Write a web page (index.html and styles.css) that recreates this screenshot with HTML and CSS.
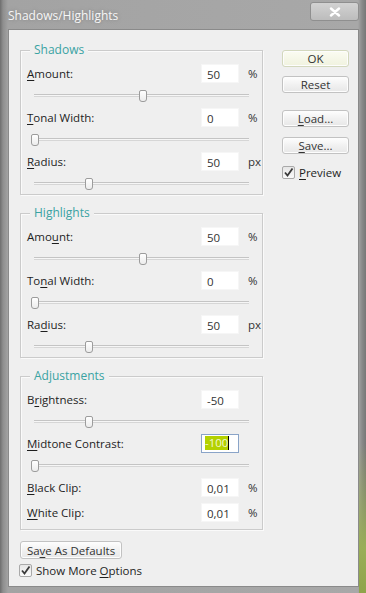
FILE: index.html
```html
<!DOCTYPE html>
<html lang="en">
<head>
    <meta charset="UTF-8">
    <title>Shadows/Highlights</title>
    <link rel="stylesheet" href="styles.css">
</head>
<body>
<div class="window">
    <div class="titlebar">
        <span class="title">Shadows/Highlights</span>
        <span class="close">
            <svg width="12" height="10" viewBox="0 0 12 10"><path d="M2 1.5 L10 8.5 M10 1.5 L2 8.5" stroke="#fff" stroke-width="2.4" stroke-linecap="round"/></svg>
        </span>
    </div>
    <div class="client">
        <div class="panels">
            <div class="group">
                <div class="legend">Shadows</div>
                <div class="row"><span class="lbl"><u>A</u>mount:</span><span class="field">50</span><span class="unit">%</span></div>
                <div class="slider"><span class="thumb" style="left:50%"></span></div>
                <div class="row"><span class="lbl"><u>T</u>onal Width:</span><span class="field">0</span><span class="unit">%</span></div>
                <div class="slider"><span class="thumb" style="left:0%"></span></div>
                <div class="row"><span class="lbl"><u>R</u>adius:</span><span class="field">50</span><span class="unit">px</span></div>
                <div class="slider"><span class="thumb" style="left:25%"></span></div>
            </div>

            <div class="group">
                <div class="legend">Highlights</div>
                <div class="row"><span class="lbl">Amo<u>u</u>nt:</span><span class="field">50</span><span class="unit">%</span></div>
                <div class="slider"><span class="thumb" style="left:50%"></span></div>
                <div class="row"><span class="lbl">To<u>n</u>al Width:</span><span class="field">0</span><span class="unit">%</span></div>
                <div class="slider"><span class="thumb" style="left:0%"></span></div>
                <div class="row"><span class="lbl">Ra<u>d</u>ius:</span><span class="field">50</span><span class="unit">px</span></div>
                <div class="slider"><span class="thumb" style="left:25%"></span></div>
            </div>

            <div class="group adjust">
                <div class="legend">Adjustments</div>
                <div class="row"><span class="lbl">B<u>r</u>ightness:</span><span class="field">-50</span><span class="unit"></span></div>
                <div class="slider"><span class="thumb" style="left:25%"></span></div>
                <div class="row"><span class="lbl"><u>M</u>idtone Contrast:</span><span class="field active"><span class="sel">-100</span><span class="caret"></span></span><span class="unit"></span></div>
                <div class="slider"><span class="thumb" style="left:0%"></span></div>
                <div class="row"><span class="lbl"><u>B</u>lack Clip:</span><span class="field">0,01</span><span class="unit">%</span></div>
                <div class="row clip"><span class="lbl"><u>W</u>hite Clip:</span><span class="field">0,01</span><span class="unit">%</span></div>
            </div>

            <div class="btn defaults">Sa<u>v</u>e As Defaults</div>
            <div class="check more">
                <span class="box"><svg width="11" height="11" viewBox="0 0 11 11"><path d="M2 5.5 L4.5 8.5 L9.5 1.5" fill="none" stroke="#3a3a3a" stroke-width="1.8"/></svg></span>
                <span>Show More <u>O</u>ptions</span>
            </div>
        </div>

        <div class="side">
            <div class="btn ok">OK</div>
            <div class="btn">Reset</div>
            <div class="btn load"><u>L</u>oad...</div>
            <div class="btn save"><u>S</u>ave...</div>
            <div class="check preview">
                <span class="box"><svg width="11" height="11" viewBox="0 0 11 11"><path d="M2 5.5 L4.5 8.5 L9.5 1.5" fill="none" stroke="#3a3a3a" stroke-width="1.8"/></svg></span>
                <span><u>P</u>review</span>
            </div>
        </div>
    </div>
</div>
</body>
</html>
```

FILE: styles.css
```css
body {
    margin: 0;
    font-family: "Open Sans", "Noto Sans", sans-serif;
    font-size: 11.5px;
    color: #1e1e1e;
}

u {
    text-decoration: underline;
    text-underline-offset: 2px;
}

.window {
    width: 366px;
    height: 593px;
    box-sizing: border-box;
    display: flex;
    flex-direction: column;
    padding: 0 7px 6px 8px;
    background: linear-gradient(to right, #6e6e6e 0, #8e8e8e 3px, #a3a3a3 8px, #a8a8a8 358px, #8a8a8a 362px, #777 366px);
    position: relative;
}

.window:after {
    content: "";
    position: absolute;
    right: 0;
    bottom: 0;
    width: 7px;
    height: 150px;
    background: linear-gradient(to bottom, rgba(150, 170, 90, 0), #9aae58 70%, #8fa44a);
}

.titlebar {
    height: 29px;
    display: flex;
    align-items: flex-start;
    justify-content: space-between;
}

.title {
    margin-top: 8px;
    font-size: 12px;
    line-height: 16px;
    color: #f6f6f6;
    text-shadow: 0 0 4px #8a8a8a, 0 0 2px #999;
}

.close {
    width: 47px;
    height: 17px;
    margin: 2px 0 0 0;
    display: flex;
    align-items: center;
    justify-content: center;
    border: 1px solid #8f8f8f;
    border-radius: 3px;
    background: linear-gradient(#d2d2d2, #bcbcbc);
}

.client {
    flex: 1;
    display: flex;
    background: #efefef;
    border: 1px solid #8a8a8a;
}

.panels {
    width: 243px;
    margin-left: 11px;
    padding-top: 20px;
}

.group {
    border: 1px solid #cbcbcb;
    box-shadow: inset 1px 1px 0 #fafafa, 1px 1px 0 #fafafa;
    padding: 0 6px;
    margin-bottom: 18px;
}

.legend {
    width: fit-content;
    margin: -9px 0 4px 3px;
    padding: 0 4px;
    line-height: 16px;
    background: #efefef;
    color: #3aa3a3;
    font-size: 12px;
}

.row {
    height: 22px;
    display: flex;
    align-items: center;
}

.row.clip {
    margin-top: 3px;
}

.lbl {
    flex: 1;
}

.field {
    width: 38px;
    height: 19px;
    box-sizing: border-box;
    padding-left: 5px;
    line-height: 19px;
    background: #fff;
    border: 1px solid #f6f6f6;
    color: #333;
}

.field.active {
    border-color: #8aa4c8;
    padding-left: 3px;
    display: flex;
    align-items: center;
}

.sel {
    background: #b4d100;
    color: #f2f7d0;
    line-height: 14px;
}

.caret {
    width: 1px;
    height: 14px;
    background: #000;
}

.unit {
    width: 17px;
    padding-left: 9px;
    box-sizing: border-box;
    color: #333;
}

.slider {
    position: relative;
    height: 22px;
    margin: 0 7px;
}

.slider:before {
    content: "";
    position: absolute;
    left: 0;
    right: 0;
    top: 10px;
    height: 1px;
    border-top: 1px solid #c4c4c4;
    border-bottom: 1px solid #d6d6d6;
    background: #f6f6f6;
}

.thumb {
    position: absolute;
    top: 6px;
    width: 6px;
    height: 10px;
    margin-left: -3px;
    background: linear-gradient(#ffffff, #ececec);
    border: 1px solid #9c9c9c;
    border-radius: 2px 2px 3px 3px;
}

.adjust {
    padding-bottom: 6px;
}

.btn {
    height: 17px;
    box-sizing: border-box;
    display: flex;
    align-items: center;
    justify-content: center;
    border: 1px solid #c2c2c2;
    border-radius: 3px;
    background: linear-gradient(#fefefe, #f1f1f1 50%, #e7e7e7);
    box-shadow: inset 0 0 0 1px #fdfdfd;
    color: #333;
}

.defaults {
    width: 102px;
    height: 18px;
    margin-top: -7px;
}

.check {
    display: flex;
    align-items: center;
    gap: 4px;
}

.box {
    width: 13px;
    height: 13px;
    box-sizing: border-box;
    display: flex;
    align-items: center;
    justify-content: center;
    border: 1px solid #a9a9a9;
    border-radius: 2px;
    background: linear-gradient(#e6e6e6, #fafafa);
}

.more {
    margin: 4px 0 0 -1px;
}

.side {
    width: 67px;
    margin-left: 19px;
    padding-top: 20px;
    display: flex;
    flex-direction: column;
    gap: 9px;
}

.ok {
    background: linear-gradient(#fbfcf2, #f0f2df);
    border-color: #d3d8bd;
}

.load {
    margin-top: 8px;
}

.save {
    margin-top: 1px;
}

.preview {
    margin-top: 2px;
}
```
